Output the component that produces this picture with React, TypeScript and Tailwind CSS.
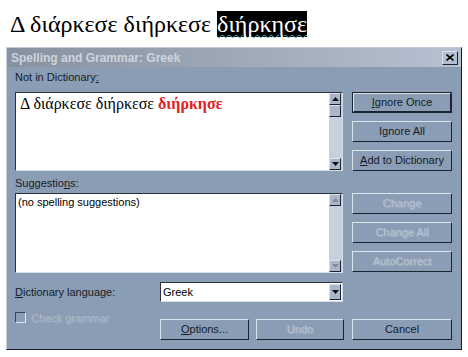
import React from "react";

// raised 3d border for buttons
const raised = "border border-t-[#dbe3ec] border-l-[#dbe3ec] border-r-[#1b2330] border-b-[#1b2330]";
const sunken = "border border-t-[#2a323d] border-l-[#2a323d] border-r-[#d5dde8] border-b-[#d5dde8]";

interface BtnProps {
    label: React.ReactNode;
    disabled?: boolean;
    isDefault?: boolean;
    className?: string;
}

const Btn = ({ label, disabled, isDefault, className }: BtnProps) => {
    return (
        <div className={`${className ?? ""} h-[21px] ${isDefault ? "border border-[#1b2330] p-0" : ""}`}>
            <div className={`h-full flex items-center justify-center ${raised} ${disabled ? "text-[#b7c3d1] [text-shadow:1px_1px_0_#a3b2c6]" : "text-[#141c26]"}`}>
                {label}
            </div>
        </div>
    );
};

const Arrow = ({ up, disabled }: { up?: boolean, disabled?: boolean }) => (
    <div className={`w-[12px] h-[12px] bg-[#a9b7c9] flex items-center justify-center ${raised}`}>
        <svg width="7" height="4" viewBox="0 0 7 4">
            <path d={up ? "M0 4 L3.5 0 L7 4 Z" : "M0 0 L3.5 4 L7 0 Z"} fill={disabled ? "#7d8ca0" : "#101010"} />
        </svg>
    </div>
);

const ScrollBar = ({ disabled }: { disabled?: boolean }) => (
    <div className="w-[13px] h-full bg-[#c6d1de] flex flex-col justify-between">
        <div className="flex flex-col">
            <Arrow up disabled={disabled} />
            {!disabled && <div className={`w-[12px] h-[12px] bg-[#a9b7c9] ${raised}`}></div>}
        </div>
        <Arrow disabled={disabled} />
    </div>
);

export default function App() {
    return (
        <div className="w-[468px] h-[357px] bg-white overflow-hidden" style={{ fontFamily: '"Liberation Sans", Arial, sans-serif' }}>
            {/* heading */}
            <div className="pt-[10px] pl-[10px] h-[38px] text-[24px] leading-[28px] text-black whitespace-nowrap" style={{ fontFamily: '"Liberation Serif", "DejaVu Serif", serif' }}>
                Δ διάρκεσε διήρκεσε <span className="bg-black text-white underline decoration-wavy decoration-[#4fb8c8] decoration-1 underline-offset-[2px]">διήρκησε</span>
            </div>

            {/* dialog */}
            <div className="ml-[6px] mt-[9px] w-[456px] h-[303px] bg-[#8b9db5] border border-t-[#c4cedb] border-l-[#c4cedb] border-r-[#141a24] border-b-[#141a24] flex flex-col text-[11px]">
                {/* title bar */}
                <div className="h-[19px] flex items-center justify-between pl-[4px] pr-[3px] bg-gradient-to-r from-[#87919f] to-[#b6c2d1]">
                    <span className="font-bold text-[#cdd4dd] text-[12px]">Spelling and Grammar: Greek</span>
                    <div className={`w-[16px] h-[14px] bg-[#b2bfce] flex items-center justify-center ${raised}`}>
                        <svg width="8" height="7" viewBox="0 0 8 7">
                            <path d="M0.5 0.5 L7.5 6.5 M7.5 0.5 L0.5 6.5" stroke="#000" strokeWidth="1.6" />
                        </svg>
                    </div>
                </div>

                <div className="flex flex-col pl-[8px] pr-[8px] text-[#141c26]">
                    <div className="mt-[3px] h-[14px] leading-[14px]">Not in Dictionary<span className="underline">:</span></div>
                    <div className="mt-[8px] flex gap-[9px]">
                        <div className={`w-[328px] h-[79px] bg-white flex ${sunken}`}>
                            <div className="flex-1 pl-[4px] pt-[1px] text-[16px] leading-[20px] text-black whitespace-nowrap" style={{ fontFamily: '"Liberation Serif", "DejaVu Serif", serif' }}>
                                Δ διάρκεσε διήρκεσε <span className="font-bold text-[#e0201c]">διήρκησε</span>
                            </div>
                            <ScrollBar />
                        </div>
                        <div className="flex flex-col gap-[8px] w-[100px]">
                            <Btn isDefault label={<span><span className="underline">I</span>gnore Once</span>} />
                            <Btn label={<span>I<span className="underline">g</span>nore All</span>} />
                            <Btn label={<span><span className="underline">A</span>dd to Dictionary</span>} />
                        </div>
                    </div>

                    <div className="mt-[5px] h-[14px] leading-[14px]">Suggestio<span className="underline">n</span>s:</div>
                    <div className="mt-[3px] flex gap-[9px]">
                        <div className={`w-[328px] h-[80px] bg-white flex ${sunken}`}>
                            <div className="flex-1 pl-[2px] pt-[1px] leading-[14px] text-black">(no spelling suggestions)</div>
                            <ScrollBar disabled />
                        </div>
                        <div className="flex flex-col gap-[8px] w-[100px]">
                            <Btn disabled label="Change" />
                            <Btn disabled label="Change All" />
                            <Btn disabled label="AutoCorrect" />
                        </div>
                    </div>

                    <div className="mt-[9px] flex items-center h-[20px]">
                        <div className="w-[145px]"><span className="underline">D</span>ictionary language:</div>
                        <div className={`w-[183px] h-[20px] bg-white flex items-center justify-between pr-[1px] ${sunken}`}>
                            <span className="pl-[2px] text-black">Greek</span>
                            <div className={`w-[12px] h-[16px] bg-[#a9b7c9] flex items-center justify-center ${raised}`}>
                                <svg width="7" height="4" viewBox="0 0 7 4"><path d="M0 0 L3.5 4 L7 0 Z" fill="#101010" /></svg>
                            </div>
                        </div>
                    </div>

                    <div className="flex">
                        <div className="w-[145px] mt-[10px] flex items-start gap-[5px] h-[12px]">
                            <div className="w-[11px] h-[11px] border border-t-[#3b4554] border-l-[#3b4554] border-r-[#dfe6ee] border-b-[#dfe6ee]"></div>
                            <span className="text-[#aab7c7] leading-[12px] [text-shadow:1px_1px_0_#9aaabf]">Check grammar</span>
                        </div>
                        <div className="mt-[17px] flex gap-[7px]">
                            <Btn className="w-[89px]" label={<span><span className="underline">O</span>ptions...</span>} />
                            <Btn className="w-[88px]" disabled label="Undo" />
                        </div>
                        <Btn className="ml-[8px] mt-[17px] w-[100px]" label="Cancel" />
                    </div>
                </div>
            </div>
        </div>
    );
}
